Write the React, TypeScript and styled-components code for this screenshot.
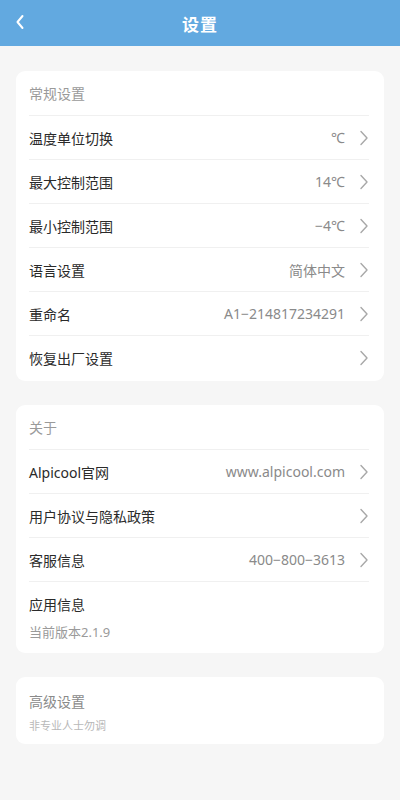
import React from 'react'
import styled, { createGlobalStyle } from 'styled-components'

const GlobalStyle = createGlobalStyle`
  html, body {
    margin: 0;
    padding: 0;
    background: #f6f6f6;
    font-family: "Noto Sans", "Noto Sans CJK SC", sans-serif;
  }
`

type Item = { label: string; value?: string; arrow?: boolean }

const general: Item[] = [
  { label: '温度单位切换', value: '℃', arrow: true },
  { label: '最大控制范围', value: '14℃', arrow: true },
  { label: '最小控制范围', value: '−4℃', arrow: true },
  { label: '语言设置', value: '简体中文', arrow: true },
  { label: '重命名', value: 'A1−214817234291', arrow: true },
  { label: '恢复出厂设置', arrow: true },
]

const about: Item[] = [
  { label: 'Alpicool官网', value: 'www.alpicool.com', arrow: true },
  { label: '用户协议与隐私政策', arrow: true },
  { label: '客服信息', value: '400−800−3613', arrow: true },
]

const Chevron = () => (
  <svg width="10" height="16" viewBox="0 0 10 16">
    <path d="M2 1.5 L8 8 L2 14.5" fill="none" stroke="#a8a8a8" strokeWidth="1.4" strokeLinecap="round" strokeLinejoin="round" />
  </svg>
)

const BackIcon = () => (
  <svg width="12" height="18" viewBox="0 0 12 18">
    <path d="M8.5 3 L3.5 9 L8.5 15" fill="none" stroke="#fff" strokeWidth="2" strokeLinecap="round" strokeLinejoin="round" />
  </svg>
)

const App = () => {
  return (
    <Page>
      <GlobalStyle />
      <TopBar>
        <BackButton><BackIcon /></BackButton>
        <Title>设置</Title>
      </TopBar>
      <Content>
        <Card>
          <SectionTitle>常规设置</SectionTitle>
          {general.map((item) => (
            <Row key={item.label}>
              <Label>{item.label}</Label>
              {item.value && <Value>{item.value}</Value>}
              {item.arrow && <ArrowBox><Chevron /></ArrowBox>}
            </Row>
          ))}
        </Card>
        <Card>
          <SectionTitle>关于</SectionTitle>
          {about.map((item) => (
            <Row key={item.label}>
              <Label>{item.label}</Label>
              {item.value && <Value>{item.value}</Value>}
              {item.arrow && <ArrowBox><Chevron /></ArrowBox>}
            </Row>
          ))}
          <InfoBlock>
            <Label>应用信息</Label>
            <SubText>当前版本2.1.9</SubText>
          </InfoBlock>
        </Card>
        <Card>
          <AdvancedBlock>
            <AdvancedTitle>高级设置</AdvancedTitle>
            <Hint>非专业人士勿调</Hint>
          </AdvancedBlock>
        </Card>
      </Content>
    </Page>
  )
}

export default App

const Page = styled.div`
  width: 400px;
  min-height: 800px;
  background: #f6f6f6;
`

const TopBar = styled.header`
  height: 46px;
  background: #62a9e0;
  display: flex;
  align-items: center;
  justify-content: center;
  position: relative;
`

const BackButton = styled.div`
  position: absolute;
  left: 14px;
  top: 13px;
  display: flex;
`

const Title = styled.h1`
  margin: 0;
  color: #fff;
  font-size: 17px;
  font-weight: 700;
  letter-spacing: 1px;
`

const Content = styled.main`
  padding: 25px 16px;
  display: flex;
  flex-direction: column;
  gap: 24px;
`

const Card = styled.section`
  background: #fff;
  border-radius: 9px;
  padding: 0 15px 2px 13px;
`

const SectionTitle = styled.div`
  height: 44px;
  display: flex;
  align-items: center;
  font-size: 14px;
  color: #9a9a9a;
`

const Row = styled.div`
  height: 44px;
  display: flex;
  align-items: center;
  border-top: 1px solid #f0f0f0;
  box-sizing: border-box;
`

const Label = styled.span`
  font-size: 14px;
  color: #2a2a2a;
  flex: 1;
`

const Value = styled.span`
  font-size: 14px;
  color: #8a8a8a;
  margin-right: 14px;
`

const ArrowBox = styled.span`
  display: flex;
  width: 10px;
  justify-content: flex-end;
`

const InfoBlock = styled.div`
  border-top: 1px solid #f0f0f0;
  padding: 12px 0 10px;
  display: flex;
  flex-direction: column;
  gap: 8px;
`

const SubText = styled.span`
  font-size: 13px;
  color: #9a9a9a;
`

const AdvancedBlock = styled.div`
  padding: 14px 0 9px;
  display: flex;
  flex-direction: column;
  gap: 6px;
`

const AdvancedTitle = styled.span`
  font-size: 14px;
  color: #8a8a8a;
`

const Hint = styled.span`
  font-size: 11px;
  color: #b8b8b8;
`
